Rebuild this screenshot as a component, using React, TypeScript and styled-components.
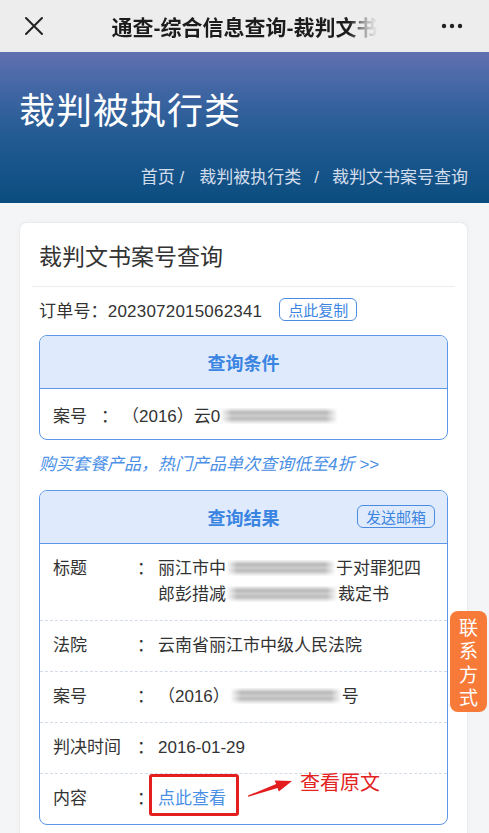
import React from "react";
import styled, { createGlobalStyle } from "styled-components";

const Global = createGlobalStyle`
  html, body {
    margin: 0;
    padding: 0;
    overflow: hidden;
    background: #f4f5f7;
  }
  * {
    box-sizing: border-box;
  }
  body {
    font-family: "Liberation Sans", "Noto Sans CJK SC", sans-serif;
    color: #333;
  }
`;

const Page = styled.div`
  position: relative;
  width: 489px;
  height: 833px;
  overflow: hidden;
  background: #f4f5f7;
`;

const TopBar = styled.div`
  display: grid;
  grid-template-columns: 68px 1fr 68px;
  align-items: center;
  height: 52px;
  background: #ededed;
`;

const BarTitle = styled.div`
  text-align: center;
  font-size: 21px;
  font-weight: 600;
  color: #1c1c1c;
  white-space: nowrap;
  overflow: hidden;
  span {
    display: inline-block;
    -webkit-mask-image: linear-gradient(to right, #000 89%, rgba(0, 0, 0, 0.25) 96%, transparent 100%);
    mask-image: linear-gradient(to right, #000 89%, rgba(0, 0, 0, 0.25) 96%, transparent 100%);
  }
`;

const IconCell = styled.div<{ $end?: boolean }>`
  display: flex;
  justify-content: ${(p) => (p.$end ? "flex-end" : "flex-start")};
  padding: ${(p) => (p.$end ? "0 26px 0 0" : "0 0 0 24px")};
  color: #222;
`;

const Banner = styled.div`
  height: 151px;
  display: flex;
  flex-direction: column;
  padding: 36px 21px 0 19px;
  background: linear-gradient(180deg, #6170b0 0%, #3b64a1 30%, #1f5990 60%, #0b4d7f 100%);
  color: #fff;
`;

const BannerTitle = styled.h1`
  margin: 0;
  font-size: 36px;
  font-weight: 400;
  line-height: 48px;
  letter-spacing: 1px;
`;

const Crumbs = styled.div`
  display: flex;
  justify-content: flex-end;
  gap: 13px;
  margin-top: 30px;
  font-size: 17px;
  line-height: 24px;
  color: #d2ddec;
  span:first-child {
    margin-right: 2px;
  }
`;

const Main = styled.div`
  padding: 19px 21px 0 19px;
`;

const Card = styled.div`
  background: #fff;
  border: 1px solid #ebebeb;
  border-radius: 8px;
  padding: 0 12px 24px;
  box-shadow: 0 0 6px rgba(0, 0, 0, 0.03);
`;

const CardTitle = styled.h2`
  margin: 0;
  padding: 19px 7px 14px;
  font-size: 23px;
  font-weight: 400;
  line-height: 30px;
  color: #333;
  border-bottom: 1px solid #ececec;
`;

const Body = styled.div`
  padding: 0 7px;
`;

const OrderRow = styled.div`
  display: flex;
  align-items: center;
  gap: 17px;
  margin-top: 10px;
  font-size: 17px;
  color: #333;
  span:first-child {
    letter-spacing: 0.2px;
  }
`;

const OutlineButton = styled.span`
  display: inline-flex;
  align-items: center;
  height: 23px;
  padding: 0 8px;
  border: 1px solid #4b8ce2;
  border-radius: 6px;
  font-size: 15px;
  color: #3c86e2;
`;

const Panel = styled.div`
  margin-top: 13px;
  border: 1px solid #5b96e8;
  border-radius: 8px;
  overflow: hidden;
  background: #fff;
`;

const PanelHead = styled.div`
  position: relative;
  height: 53px;
  display: flex;
  align-items: center;
  justify-content: center;
  background: #dfebfd;
  border-bottom: 1px solid #5b96e8;
  font-size: 18px;
  font-weight: 700;
  color: #3a84e2;
`;

const HeadAction = styled.div`
  position: absolute;
  right: 12px;
  top: 14px;
  font-weight: 400;
`;

const CondRow = styled.div`
  display: flex;
  align-items: center;
  height: 50px;
  padding: 0 13px;
  font-size: 17px;
  color: #333;
`;

const Colon = styled.span<{ $gap?: number }>`
  width: 17px;
  text-align: center;
  margin-left: ${(p) => p.$gap ?? 0}px;
  margin-right: 4px;
`;

const Promo = styled.div`
  margin: 12px 0;
  font-size: 17px;
  line-height: 26px;
  font-style: italic;
  color: #4a8fe6;
`;

const ResultPanel = styled(Panel)`
  margin-top: 0;
`;

const ResultRow = styled.div`
  display: flex;
  padding: 12px 13px;
  font-size: 17px;
  line-height: 26px;
  color: #333;
  & + & {
    border-top: 1px dashed #d3dbe8;
  }
  &:first-of-type {
    padding-bottom: 13px;
  }
`;

const Label = styled.span`
  width: 84px;
  flex: none;
`;

const Value = styled.span`
  position: relative;
  flex: 1;
`;

const Line = styled.span`
  display: block;
  white-space: nowrap;
`;

const Smudge = styled.span<{ $w: number }>`
  display: inline-block;
  width: ${(p) => p.$w}px;
  height: 16px;
  vertical-align: -2px;
  background: linear-gradient(
    to bottom,
    transparent 0%,
    #d4d4d4 15%,
    #a3a3a3 32%,
    #e6e6e6 48%,
    #a8a8a8 64%,
    #d8d8d8 82%,
    transparent 100%
  );
  filter: blur(1.4px);
  -webkit-mask-image: linear-gradient(to right, transparent, #000 10%, #000 90%, transparent);
  mask-image: linear-gradient(to right, transparent, #000 10%, #000 90%, transparent);
`;

const LinkText = styled.span`
  color: #4a8fe6;
`;

const MarkBox = styled.span`
  position: absolute;
  left: -9px;
  top: -12px;
  width: 90px;
  height: 42px;
  border: 3px solid #e41e1e;
  border-radius: 3px;
`;

const MarkArrow = styled.svg`
  position: absolute;
  left: 89px;
  top: -9px;
`;

const MarkNote = styled.span`
  position: absolute;
  left: 142px;
  top: -15px;
  font-size: 20px;
  line-height: 24px;
  color: #e3241f;
  white-space: nowrap;
`;

const ContactTab = styled.div`
  position: absolute;
  right: 2px;
  top: 611px;
  width: 37px;
  height: 101px;
  display: flex;
  flex-direction: column;
  align-items: center;
  justify-content: center;
  padding-top: 4px;
  border-radius: 8px;
  background: #f77a38;
  color: #fff;
  font-size: 19px;
  line-height: 23.5px;
`;

function CloseIcon() {
  return (
    <svg width="20" height="20" viewBox="0 0 20 20">
      <path d="M2 2 L18 18 M18 2 L2 18" stroke="#222" strokeWidth="2" strokeLinecap="round" />
    </svg>
  );
}

function MoreIcon() {
  return (
    <svg width="22" height="6" viewBox="0 0 22 6">
      <circle cx="3" cy="3" r="2.2" fill="#222" />
      <circle cx="11" cy="3" r="2.2" fill="#222" />
      <circle cx="19" cy="3" r="2.2" fill="#222" />
    </svg>
  );
}

export default function App() {
  return (
    <Page>
      <Global />
      <TopBar>
        <IconCell>
          <CloseIcon />
        </IconCell>
        <BarTitle>
          <span>通查-综合信息查询-裁判文书</span>
        </BarTitle>
        <IconCell $end>
          <MoreIcon />
        </IconCell>
      </TopBar>

      <Banner>
        <BannerTitle>裁判被执行类</BannerTitle>
        <Crumbs>
          <span>首页 /</span>
          <span>裁判被执行类</span>
          <span>/</span>
          <span>裁判文书案号查询</span>
        </Crumbs>
      </Banner>

      <Main>
        <Card>
          <CardTitle>裁判文书案号查询</CardTitle>
          <Body>
            <OrderRow>
              <span>订单号：2023072015062341</span>
              <OutlineButton>点此复制</OutlineButton>
            </OrderRow>

            <Panel>
              <PanelHead>查询条件</PanelHead>
              <CondRow>
                <span>案号</span>
                <Colon $gap={14}>：</Colon>
                <span>
                  （2016）云0
                  <Smudge $w={118} />
                </span>
              </CondRow>
            </Panel>

            <Promo>购买套餐产品，热门产品单次查询低至4折 &gt;&gt;</Promo>

            <ResultPanel>
              <PanelHead>
                查询结果
                <HeadAction>
                  <OutlineButton>发送邮箱</OutlineButton>
                </HeadAction>
              </PanelHead>
              <ResultRow>
                <Label>标题</Label>
                <Colon>：</Colon>
                <Value>
                  <Line>
                    丽江市中
                    <Smudge $w={110} />
                    于对罪犯四
                  </Line>
                  <Line>
                    郎彭措减
                    <Smudge $w={112} />
                    裁定书
                  </Line>
                </Value>
              </ResultRow>
              <ResultRow>
                <Label>法院</Label>
                <Colon>：</Colon>
                <Value>云南省丽江市中级人民法院</Value>
              </ResultRow>
              <ResultRow>
                <Label>案号</Label>
                <Colon>：</Colon>
                <Value>
                  （2016）
                  <Smudge $w={112} />号
                </Value>
              </ResultRow>
              <ResultRow>
                <Label>判决时间</Label>
                <Colon>：</Colon>
                <Value>2016-01-29</Value>
              </ResultRow>
              <ResultRow>
                <Label>内容</Label>
                <Colon>：</Colon>
                <Value>
                  <LinkText>点此查看</LinkText>
                  <MarkBox />
                  <MarkArrow width="48" height="24" viewBox="0 0 48 24">
                    <polygon
                      points="1,19.8 30.6,11.1 31.8,14.6 45,4 27.6,3.4 29.2,7 1,18.6"
                      fill="#e41e1e"
                    />
                  </MarkArrow>
                  <MarkNote>查看原文</MarkNote>
                </Value>
              </ResultRow>
            </ResultPanel>
          </Body>
        </Card>
      </Main>

      <ContactTab>
        {"联系方式".split("").map((c, i) => (
          <span key={i}>{c}</span>
        ))}
      </ContactTab>
    </Page>
  );
}
